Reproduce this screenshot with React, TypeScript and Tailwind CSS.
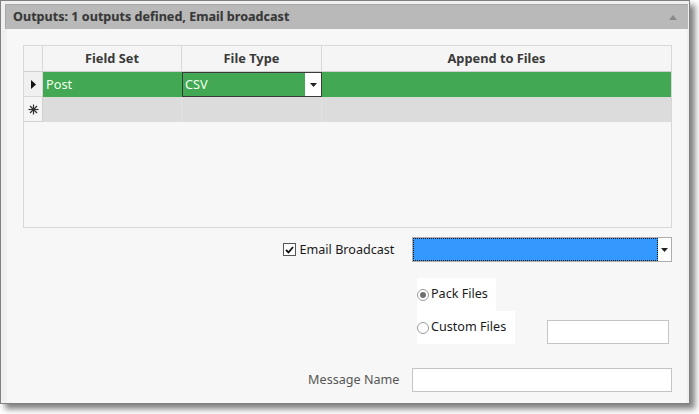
import { useState } from 'react';

const font = { fontFamily: '"Noto Sans", "Open Sans", sans-serif' };

function Asterisk() {
  return (
    <svg width="11" height="11" viewBox="0 0 11 11" className="text-[#333]">
      <g stroke="currentColor" strokeWidth="1.2">
        <line x1="5.5" y1="0.5" x2="5.5" y2="10.5" />
        <line x1="0.5" y1="5.5" x2="10.5" y2="5.5" />
        <line x1="2" y1="2" x2="9" y2="9" />
        <line x1="9" y1="2" x2="2" y2="9" />
      </g>
    </svg>
  );
}

function DropArrow() {
  return (
    <svg width="7" height="4" viewBox="0 0 7 4">
      <path d="M0 0h7L3.5 4z" fill="#222" />
    </svg>
  );
}

function OutputsGrid() {
  return (
    <div className="w-full h-[183px] border border-[#d8d8d8] bg-[#f7f7f7] flex flex-col">
      {/* column headers */}
      <div className="flex h-[26px] bg-[#f5f5f5] border-b border-[#cfcfcf] text-[12.8px] font-bold text-[#3a3a3a]">
        <div className="w-[19px] border-r border-[#d8d8d8]" />
        <div className="w-[139px] border-r border-[#d8d8d8] flex items-center justify-center">Field Set</div>
        <div className="w-[140px] border-r border-[#d8d8d8] flex items-center justify-center">File Type</div>
        <div className="flex-1 flex items-center justify-center">Append to Files</div>
      </div>

      {/* current row */}
      <div className="flex h-[25px] text-[12.8px]">
        <div className="w-[19px] bg-[#f0f0f0] border-r border-[#d8d8d8] border-b flex items-center justify-center">
          <svg width="5" height="9" viewBox="0 0 5 9">
            <path d="M0 0l5 4.5L0 9z" fill="#111" />
          </svg>
        </div>
        <div className="w-[139px] bg-[#43a853] text-[#f0fff0] flex items-center pl-[3px]">Post</div>
        <div className="w-[140px] bg-[#43a853] border border-[#3a3a3a] flex items-center">
          <span className="flex-1 pl-[2px] text-[#f0fff0]">CSV</span>
          <div className="w-[16px] h-full bg-white flex items-center justify-center">
            <DropArrow />
          </div>
        </div>
        <div className="flex-1 bg-[#43a853]" />
      </div>

      {/* new row */}
      <div className="flex h-[25px]">
        <div className="w-[19px] bg-[#f5f5f5] border-r border-b border-[#d0d0d0] flex items-center justify-center">
          <Asterisk />
        </div>
        <div className="w-[139px] bg-[#dcdcdc] border-r border-[#e2e2e2]" />
        <div className="w-[140px] bg-[#dcdcdc] border-r border-[#e2e2e2]" />
        <div className="flex-1 bg-[#dcdcdc]" />
      </div>
    </div>
  );
}

function Radio({ checked, label }: { checked: boolean; label: string }) {
  return (
    <div className="flex items-center h-full">
      <span className="w-[12px] h-[12px] rounded-full border border-[#9a9a9a] bg-white flex items-center justify-center">
        {checked && <span className="w-[6px] h-[6px] rounded-full bg-[#707070]" />}
      </span>
      <span className="ml-[2px] text-[12.6px] text-[#1a1a1a]">{label}</span>
    </div>
  );
}

export default function App() {
  const [email] = useState(true);

  return (
    <div className="w-[699px] h-[414px] bg-white" style={font}>
      <div className="w-[690px] h-[404px] border border-[#808080] bg-[#f0f0f0] pt-[3px] pl-[4px] pr-[1px] flex flex-col shadow-[5px_5px_6px_rgba(0,0,0,0.5)]">
        {/* collapsible section header */}
        <div className="h-[25px] bg-[#b9b9b9] border-t border-l border-[#a9a9a9] flex items-center justify-between pl-[7px] pr-[11px]">
          <span className="text-[12.6px] font-bold text-[#383838] [text-shadow:0_0_1px_rgba(0,0,0,0.15)]">
            Outputs: 1 outputs defined, Email broadcast
          </span>
          <svg width="8" height="5" viewBox="0 0 8 5">
            <path d="M0 5h8L4 0z" fill="#8a8a8a" />
          </svg>
        </div>

        <div className="flex-1 ml-[2px] mr-[1px] bg-[#f7f7f7] pt-[16px] pl-[16px] pr-[15px] flex flex-col">
          <OutputsGrid />

          {/* email broadcast */}
          <div className="flex items-center mt-[9px] h-[25px]">
            <div className="w-[390px] flex items-center justify-end pr-[18px] pt-[1px]">
              <span className="w-[13px] h-[13px] border border-[#555] bg-white flex items-center justify-center">
                {email && (
                  <svg width="9" height="8" viewBox="0 0 9 8">
                    <path d="M1 4l2.5 2.5L8 1" stroke="#111" strokeWidth="1.8" fill="none" />
                  </svg>
                )}
              </span>
              <span className="ml-[4px] text-[12.6px] text-[#1a1a1a]">Email Broadcast</span>
            </div>
            <div className="w-[260px] h-[25px] border border-[#adadad] flex">
              <div className="flex-1 bg-[#3399ff] border border-dotted border-[#111]" />
              <div className="w-[13px] bg-white flex items-center justify-center">
                <DropArrow />
              </div>
            </div>
          </div>

          {/* attachment mode */}
          <div className="flex flex-col mt-[16px] ml-[394px]">
            <div className="flex h-[33px]">
              <div className="w-[79px] bg-white">
                <Radio checked label="Pack Files" />
              </div>
            </div>
            <div className="flex h-[33px]">
              <div className="w-[98px] bg-white">
                <Radio checked={false} label="Custom Files" />
              </div>
              <div className="ml-[32px] mt-[9px] w-[122px] h-[24px] bg-white border border-[#c4c4c4]" />
            </div>
          </div>

          {/* message name */}
          <div className="flex items-center mt-[24px] h-[24px]">
            <div className="w-[390px] flex justify-end pr-[13px] text-[12.6px] text-[#555]">Message Name</div>
            <div className="w-[260px] h-[24px] bg-white border border-[#c4c4c4]" />
          </div>
        </div>
      </div>
    </div>
  );
}
